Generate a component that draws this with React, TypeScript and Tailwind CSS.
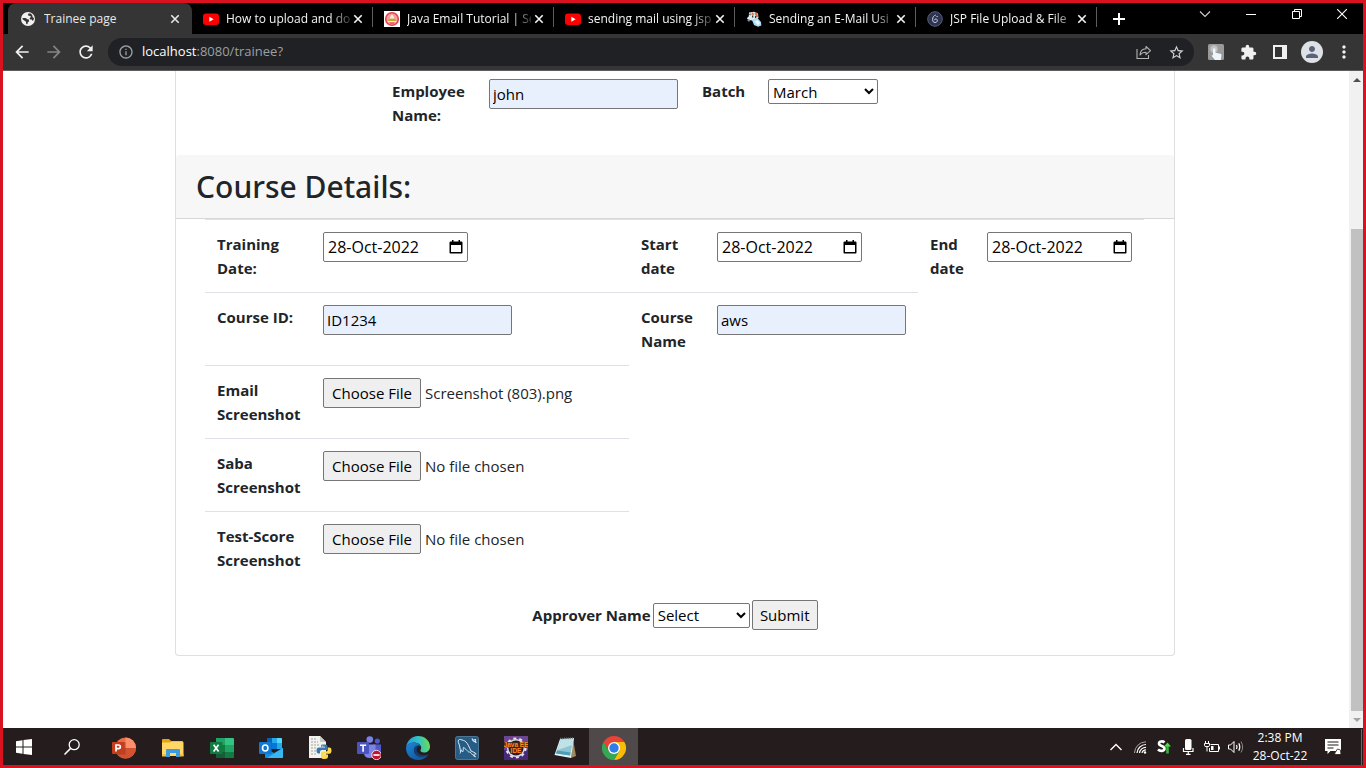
import { useEffect, useRef, useState } from "react";
import type { ReactNode } from "react";
import {
  MdArrowBack,
  MdArrowForward,
  MdRefresh,
  MdInfoOutline,
  MdStarBorder,
  MdExtension,
  MdMoreVert,
  MdPerson,
} from "react-icons/md";

/* ---------- tab strip ---------- */

function YouTubeIcon() {
  return (
    <svg viewBox="0 0 16 16" className="size-4 shrink-0" aria-hidden="true">
      <rect x="0" y="2.5" width="16" height="11.5" rx="3" fill="#f00" />
      <path d="M6.3 5.7v5l4.4-2.5z" fill="#fff" />
    </svg>
  );
}

function GlobeIcon() {
  return (
    <svg viewBox="0 0 16 16" className="size-4 shrink-0" aria-hidden="true">
      <circle cx="8" cy="8" r="7" fill="#f1f1f1" />
      <path
        d="M2.500 7h3.200l1.700 1.300 1.300.2.500 1.700-1.500 1.300-.2 1.800-1.300-.3-.2-2.200-1.700-1.300-1.800-1.200zM8.500 2.600l-.7 1.300 1 .9 1.700.3.300 1.200-1.300.8.600 1.300 1.700.2.900 1.300 1-1.200.2-1.800-1.300-1-.3-1.700-1.500-1.600z"
        fill="#353535"
      />
    </svg>
  );
}

function JavaFaceIcon() {
  return (
    <svg viewBox="0 0 16 16" className="size-4 shrink-0" aria-hidden="true">
      <rect width="16" height="16" fill="#fff" />
      <circle cx="8" cy="8" r="6.300" fill="#f4a09c" stroke="#e8434c" strokeWidth="1.600" />
      <path d="M8 3.200 10 6 9.600 8 6.400 8 6 6z" fill="#f7ecd6" />
      <path d="M3.800 10.200c.4-1.600 2.100-2.600 4.200-2.600s3.800 1 4.200 2.600z" fill="#c9a52c" />
      <path d="M3.600 10.700h8.800" stroke="#fff" strokeWidth="1" />
      <path d="M4.500 11.500h7q-3.500 2.500-7 0z" fill="#e8434c" />
    </svg>
  );
}

function CowIcon() {
  return (
    <svg viewBox="0 0 16 16" className="size-4 shrink-0" aria-hidden="true">
      <path d="M3 1.500 8 .8l4 1.700.5 4.500-4.500 3-6-1.500L.8 7.300l2-2z" fill="#dfe8ec" />
      <path d="M5 3.500 7 1l1 3zM8.500 2.200 11 1.600l1.200 4.200-1.700.8z" fill="#e06a3c" />
      <path d="M6 4.500h1.300v2H6zM9 5h1.200v2.200H9zM3 3.200l1.400-1 .2 2.300z" fill="#2b3740" />
      <path d="M6 9l5-2.500 4 4.500.3 3.600-3.300 1.200-4-1.800z" fill="#a9dcf5" />
      <path d="M8.500 10.500l3-1.500 2.500 3-2 2.200z" fill="#e8f7ff" />
      <path d="M.8 8.800l4 .8-2 1.200z" fill="#8aa3ad" />
    </svg>
  );
}

function GeekIcon() {
  return (
    <svg viewBox="0 0 16 16" className="size-4 shrink-0" aria-hidden="true">
      <circle cx="8" cy="8" r="7.300" fill="#2d3450" stroke="#565d7a" strokeWidth="1" />
      <path
        d="M8.800 4C6.800 4.500 5.600 6.300 5.600 8.500s1 3 2.400 3 2.300-.8 2.300-2-.7-1.500-1.500-1.500-1.300.4-1.300 1.200M9.500 5.500h1.200"
        fill="none"
        stroke="#cfd3e0"
        strokeWidth="1"
      />
    </svg>
  );
}

function CloseIcon() {
  return (
    <svg viewBox="0 0 10 10" className="size-[10px]" aria-hidden="true">
      <path d="M1.300 1.300l7.400 7.400M8.700 1.300 1.300 8.700" stroke="currentColor" strokeWidth="1.600" />
    </svg>
  );
}

type TabInfo = { title: string; icon: ReactNode };

const tabs: TabInfo[] = [
  { title: "How to upload and do", icon: <YouTubeIcon /> },
  { title: "Java Email Tutorial | Se", icon: <JavaFaceIcon /> },
  { title: "sending mail using jsp", icon: <YouTubeIcon /> },
  { title: "Sending an E-Mail Usi", icon: <CowIcon /> },
  { title: "JSP File Upload & File", icon: <GeekIcon /> },
];

function Tab({ title, icon }: TabInfo) {
  return (
    <div className="relative flex h-full min-w-0 basis-[181px] items-center pr-[7px] pl-[11px] text-[#f4f4f4]">
      {icon}
      <span className="ml-[7px] min-w-0 flex-1 overflow-hidden whitespace-nowrap [mask-image:linear-gradient(to_right,black_84%,#0003)]">
        {title}
      </span>
      <button type="button" aria-label={`Close ${title}`} className="grid size-4 place-items-center">
        <CloseIcon />
      </button>
      <span className="absolute top-1 right-0 h-5 w-px bg-[#5c5c5c]" />
    </div>
  );
}

function TabStrip() {
  return (
    <div className="flex h-[31px] items-stretch bg-black pl-[5px] text-[12px]">
      <div className="flex min-w-0 basis-[184px] items-center rounded-t-lg bg-[#353535] pr-[9px] pl-3 text-[#e8e8e8]">
        <GlobeIcon />
        <span className="ml-2 flex-1 truncate">Trainee page</span>
        <button type="button" aria-label="Close Trainee page" className="ml-1 grid size-4 place-items-center">
          <CloseIcon />
        </button>
      </div>
      {tabs.map((tab) => (
        <Tab key={tab.title} {...tab} />
      ))}
      <button type="button" aria-label="New tab" className="grid w-11 place-items-center text-white">
        <svg viewBox="0 0 12 12" className="size-3" aria-hidden="true">
          <path d="M6 0v12M0 6h12" stroke="currentColor" strokeWidth="2" />
        </svg>
      </button>
      <div className="ml-auto flex h-[22px] text-white">
        <button type="button" aria-label="Search tabs" className="grid w-[46px] place-items-center">
          <svg viewBox="0 0 12 12" className="size-3" aria-hidden="true">
            <path d="M1 3.500 6 8.500l5-5" fill="none" stroke="#cfcfcf" strokeWidth="1.100" />
          </svg>
        </button>
        <button type="button" aria-label="Minimize" className="grid w-[46px] place-items-center">
          <svg viewBox="0 0 10 10" className="size-[10px]" aria-hidden="true">
            <path d="M0 5.500h10" stroke="currentColor" />
          </svg>
        </button>
        <button type="button" aria-label="Restore" className="grid w-[46px] place-items-center">
          <svg viewBox="0 0 10 10" className="size-[10px]" aria-hidden="true">
            <path d="M.5 2.500h7v7h-7zM2.500 2.500v-2h7v7h-2" fill="none" stroke="currentColor" />
          </svg>
        </button>
        <button type="button" aria-label="Close window" className="grid w-[43px] place-items-center">
          <svg viewBox="0 0 10 10" className="size-[10px]" aria-hidden="true">
            <path d="M0 0l10 10M10 0 0 10" stroke="currentColor" strokeWidth="1.100" />
          </svg>
        </button>
      </div>
    </div>
  );
}

/* ---------- address bar ---------- */

function Toolbar() {
  return (
    <div className="flex h-[37px] items-center border-b border-[#5f5c5f] bg-[#353535] pl-[3px] text-[#f1f1f1]">
      <button type="button" aria-label="Back" className="grid size-8 place-items-center">
        <MdArrowBack size={20} />
      </button>
      <button type="button" aria-label="Forward" className="grid size-8 place-items-center text-[#858585]">
        <MdArrowForward size={20} />
      </button>
      <button type="button" aria-label="Reload" className="grid size-8 place-items-center">
        <MdRefresh size={20} />
      </button>
      <div className="ml-1.5 flex h-7 min-w-0 flex-1 items-center rounded-full bg-[#202124] pr-2.5 pl-2.5 text-[#9aa0a6]">
        <MdInfoOutline size={16} />
        <div className="ml-2 flex-1 text-[13px]">
          <span className="text-white">localhost</span>:8080/trainee?
        </div>
        <button type="button" aria-label="Share" className="grid w-8 place-items-center text-[#b4b4b4]">
          <svg viewBox="0 0 16 16" className="size-4" fill="none" stroke="currentColor" strokeWidth="1.100" aria-hidden="true">
            <path d="M1 5v9.500h11.500V11" />
            <path d="M10 2.500v2.300C6 5 4.200 7.500 4 11c1.500-2 3.300-2.700 6-2.700v2.400l4.500-4.100z" strokeLinejoin="round" />
          </svg>
        </button>
        <button type="button" aria-label="Bookmark" className="-mr-2 grid w-8 place-items-center text-[#d0d0d0]">
          <MdStarBorder size={17} />
        </button>
      </div>
      <button type="button" aria-label="Touch extension" className="ml-1.5 grid size-8 place-items-center">
        <svg viewBox="0 0 16 16" className="size-4" aria-hidden="true">
          <rect width="16" height="16" rx="1.500" fill="#9a9a9a" />
          <circle cx="6" cy="5" r="3.800" fill="#c4c4c4" stroke="#b0b0b0" />
          <path d="M5 5.500a1.200 1.200 0 0 1 2.400 0v3.200l5 1.100c1 .3 1.200 1 1 2L12.800 16H7l-3.500-4.200 1.500-.8z" fill="#eef5fb" />
        </svg>
      </button>
      <button type="button" aria-label="Extensions" className="grid size-8 place-items-center">
        <MdExtension size={17} />
      </button>
      <button type="button" aria-label="Side panel" className="grid size-8 place-items-center">
        <svg viewBox="0 0 14 14" className="size-[14px]" aria-hidden="true">
          <path d="M0 0h14v14H0zM2 2v10h7V2z" fillRule="evenodd" fill="currentColor" />
        </svg>
      </button>
      <button type="button" aria-label="Profile" className="grid size-8 place-items-center">
        <span className="grid size-[22px] place-items-center rounded-full bg-[#dee1e6] text-[#5a6478]">
          <MdPerson size={18} />
        </span>
      </button>
      <button type="button" aria-label="Menu" className="mr-[3px] grid size-8 place-items-center">
        <MdMoreVert size={20} />
      </button>
    </div>
  );
}

/* ---------- form ---------- */

const fieldBorder = "rounded-[2px] border border-[#767676]";

function TextField({ id, initial }: { id: string; initial: string }) {
  return (
    <input
      id={id}
      name={id}
      type="text"
      defaultValue={initial}
      className={`block h-[30px] w-[189px] bg-[#e8f0fe] px-[3px] text-black ${fieldBorder}`}
    />
  );
}

function DateField({ id }: { id: string }) {
  return (
    <div className={`flex h-[30px] w-[145px] items-center bg-white px-1 text-black ${fieldBorder}`}>
      <input id={id} name={id} type="text" defaultValue="28-Oct-2022" className="w-0 flex-1 text-[16px] outline-none" />
      <button type="button" aria-label="Open calendar" className="grid size-[14px] place-items-center">
        <svg viewBox="0 0 14 14" className="size-[14px]" aria-hidden="true">
          <path d="M3 0h1.500v1.500h5V0H11v1.500h1.500Q13.500 1.500 13.500 2.500v10q0 1-1 1h-11q-1 0-1-1v-10q0-1 1-1H3zM2 5v7h10V5z" fillRule="evenodd" />
        </svg>
      </button>
    </div>
  );
}

function FileField({ id, fileName }: { id: string; fileName?: string }) {
  const ref = useRef<HTMLInputElement>(null);
  useEffect(() => {
    if (ref.current && fileName) {
      const transfer = new DataTransfer();
      transfer.items.add(new File([""], fileName, { type: "image/png" }));
      ref.current.files = transfer.files;
    }
  }, [fileName]);
  return (
    <input
      ref={ref}
      id={id}
      name={id}
      type="file"
      className="block h-[30px] w-full file:mr-1 file:h-[30px] file:w-[98px] file:rounded-[2px] file:border file:border-solid file:border-[#767676] file:bg-[#efefef] file:p-0 file:text-black"
    />
  );
}

function FieldLabel({ htmlFor, children }: { htmlFor: string; children: ReactNode }) {
  return (
    <th scope="row" className="border-t border-[#dee2e6] p-3 text-left align-top">
      <label htmlFor={htmlFor} className="block font-bold">
        {children}
      </label>
    </th>
  );
}

function FieldCell({ children }: { children: ReactNode }) {
  return <td className="border-t border-[#dee2e6] p-3 align-top font-normal">{children}</td>;
}

const uploads = [
  { id: "emailScreenshot", label: "Email Screenshot", fileName: "Screenshot (803).png" },
  { id: "sabaScreenshot", label: "Saba Screenshot" },
  { id: "scoreScreenshot", label: "Test-Score Screenshot" },
];

function TraineeForm() {
  const [batch, setBatch] = useState("March");
  const [approver, setApprover] = useState("");
  return (
    <form
      onSubmit={(event) => event.preventDefault()}
      className="w-full max-w-[1000px] rounded-b border border-t-0 border-[#dfdfdf] bg-white text-[15px] leading-6 text-[#212529]"
    >
      <div className="flex h-[84px] items-start pt-2 pl-[216px]">
        <label htmlFor="employee" className="w-[97px] pr-4 font-bold">
          Employee Name:
        </label>
        <TextField id="employee" initial="john" />
        <label htmlFor="batch" className="ml-6 w-[66px] font-bold">
          Batch
        </label>
        <select
          id="batch"
          value={batch}
          onChange={(event) => setBatch(event.target.value)}
          className={`h-[25px] w-[110px] bg-white text-black ${fieldBorder}`}
        >
          <option>March</option>
          <option>April</option>
          <option>May</option>
        </select>
      </div>

      <div className="flex h-16 items-center rounded-t-[3px] border-b border-[#d8d8d8] bg-[#f7f7f7] px-5">
        <h2 className="font-['Noto_Sans','Open_Sans',sans-serif] text-[30px] leading-9 font-medium">Course Details:</h2>
      </div>

      <div className="pr-[30px] pl-[29px]">
        <table className="w-full table-fixed border-separate border-spacing-0">
          <colgroup>
            <col className="w-[106px]" />
            <col />
            <col className="w-[76px]" />
            <col className="w-[213px]" />
            <col className="w-[57px]" />
            <col className="w-[169px]" />
          </colgroup>
          <tbody>
            <tr>
              <FieldLabel htmlFor="trainingDate">Training Date:</FieldLabel>
              <FieldCell>
                <DateField id="trainingDate" />
              </FieldCell>
              <FieldLabel htmlFor="startDate">Start date</FieldLabel>
              <FieldCell>
                <DateField id="startDate" />
              </FieldCell>
              <FieldLabel htmlFor="endDate">End date</FieldLabel>
              <FieldCell>
                <DateField id="endDate" />
              </FieldCell>
            </tr>
            <tr>
              <FieldLabel htmlFor="courseId">Course ID:</FieldLabel>
              <FieldCell>
                <TextField id="courseId" initial="ID1234" />
              </FieldCell>
              <FieldLabel htmlFor="courseName">Course Name</FieldLabel>
              <FieldCell>
                <TextField id="courseName" initial="aws" />
              </FieldCell>
            </tr>
            {uploads.map((upload) => (
              <tr key={upload.id}>
                <FieldLabel htmlFor={upload.id}>{upload.label}</FieldLabel>
                <FieldCell>
                  <FileField id={upload.id} fileName={upload.fileName} />
                </FieldCell>
              </tr>
            ))}
          </tbody>
        </table>
      </div>

      <div className="flex items-center justify-center gap-0.5 pt-4 pb-[25px]">
        <label htmlFor="approver" className="font-bold">
          Approver Name
        </label>
        <select
          id="approver"
          value={approver}
          onChange={(event) => setApprover(event.target.value)}
          className={`h-[25px] w-[97px] bg-white text-black ${fieldBorder}`}
        >
          <option value="">Select</option>
          <option>Manager</option>
        </select>
        <button type="submit" className={`h-[30px] w-[66px] bg-[#efefef] text-black ${fieldBorder}`}>
          Submit
        </button>
      </div>
    </form>
  );
}

function ScrollTrack() {
  return (
    <div className="flex w-[14px] flex-col bg-[#f1f1f1]" aria-hidden="true">
      <div className="grid h-[17px] place-items-center">
        <svg viewBox="0 0 8 4" className="ml-0.5 h-1 w-2">
          <path d="M0 4 4 0l4 4z" fill="#505050" />
        </svg>
      </div>
      <div className="flex flex-1 flex-col pl-0.5">
        <div className="basis-[141px]" />
        <div className="flex-1 bg-[#c1c1c1]" />
      </div>
      <div className="grid h-[17px] place-items-center">
        <svg viewBox="0 0 8 4" className="ml-0.5 h-1 w-2">
          <path d="M0 0l4 4 4-4z" fill="#a3a3a3" />
        </svg>
      </div>
    </div>
  );
}

/* ---------- taskbar ---------- */

function WindowsIcon() {
  return (
    <svg viewBox="0 0 16 16" className="size-4" aria-hidden="true">
      <path d="M0 2.200 6.500 1.300v6.200H0zM7.500 1.100 16 0v7.500H7.500zM0 8.500h6.500v6.200L0 13.800zM7.500 8.500H16V16l-8.500-1.100z" fill="#fff" />
    </svg>
  );
}

function SearchIcon() {
  return (
    <svg viewBox="0 0 16 16" className="size-4" fill="none" stroke="#fff" aria-hidden="true">
      <circle cx="10.200" cy="5.700" r="5" strokeWidth="1.300" />
      <path d="M6.600 9.400.5 15.500" strokeWidth="1.500" />
    </svg>
  );
}

function PowerPointIcon() {
  return (
    <svg viewBox="0 0 24 24" className="size-6" aria-hidden="true">
      <circle cx="13.500" cy="12" r="10.500" fill="#ed6c47" />
      <path d="M13.500 1.500A10.500 10.500 0 0 1 24 12H13.500z" fill="#ff8f6b" />
      <path d="M3 12h21a10.500 10.500 0 0 1-21 0z" fill="#d35230" />
      <path d="M3 6h9.500q1 0 1 1v11.500H5z" fill="#9f3b22" opacity=".6" />
      <rect y="6" width="12" height="12" rx="1" fill="#c43e1c" />
      <path d="M4 15.500V9h2.500a1.800 1.800 0 0 1 0 3.700H4" fill="none" stroke="#fff" strokeWidth="1.700" />
    </svg>
  );
}

function FolderIcon() {
  return (
    <svg viewBox="0 0 24 24" className="size-6" aria-hidden="true">
      <path d="M1 4q0-1 1-1h6l2 2h11q1 0 1 1v4H1z" fill="#e5a50f" />
      <path d="M1 6.500h8l1.500-1H21q1.500 0 1.500 1.200V20H1z" fill="#ffd765" />
      <path d="M5 21v-7q0-1 1-1h12q1 0 1 1v7h-4v-4H9v4z" fill="#3e9be0" />
      <path d="M1 18h4v2.500H1zM19 18h3.500v2.500H19z" fill="#f6bf3e" />
    </svg>
  );
}

function ExcelIcon() {
  return (
    <svg viewBox="0 0 24 24" className="size-6" aria-hidden="true">
      <path d="M6 2h9v7H6z" fill="#21a366" />
      <path d="M15 2h8q1 0 1 1v6h-9z" fill="#33c481" />
      <path d="M6 9h9v7H6z" fill="#107c41" />
      <path d="M15 9h9v7h-9z" fill="#21a366" />
      <path d="M6 16h18v5q0 1-1 1H6z" fill="#185c37" />
      <path d="M15 16h9v5q0 1-1 1h-8z" fill="#107c41" />
      <rect y="6" width="12.500" height="12" rx="1" fill="#107c41" />
      <path d="M3.600 8.800l5 6.700M8.600 8.800l-5 6.700" stroke="#fff" strokeWidth="1.700" />
    </svg>
  );
}

function OutlookIcon() {
  return (
    <svg viewBox="0 0 24 24" className="size-6" aria-hidden="true">
      <path d="M8 3q0-1 1-1h13q1 0 1 1v10H8z" fill="#0364b8" />
      <path d="M13 2h5v5h-5z" fill="#28a8ea" />
      <path d="M18 2h4q1 0 1 1v4h-5z" fill="#50d9ff" />
      <path d="M18 7h5v6h-5z" fill="#28a8ea" />
      <path d="M13 7h5v6h-5z" fill="#0078d4" />
      <path d="M6 12l9 5 9-5v9q0 1-1 1H7q-1 0-1-1z" fill="#1490df" />
      <path d="M24 12v9q0 1-1 1H8z" fill="#35b8f1" />
      <rect y="6" width="12.500" height="12" rx="1" fill="#0f78d4" />
      <ellipse cx="6.200" cy="12" rx="2.700" ry="3" fill="none" stroke="#fff" strokeWidth="1.600" />
    </svg>
  );
}

function PythonFileIcon() {
  return (
    <svg viewBox="0 0 24 24" className="size-6" aria-hidden="true">
      <path d="M1 0h11l6 6v16H1z" fill="#f2f2ee" />
      <path d="M12 0v6h6z" fill="#c9c9c5" />
      <path d="M3 3h6M3 6h7M3 9h8M3 12h6M3 15h6M3 18h6" stroke="#a5a5a3" strokeDasharray="2 1" />
      <path d="M14.500 8.500h3q2 0 2 2V14h-5.500q-2 0-2 2v1.500h-1.500Q8.500 17.500 8.500 14.500t2.500-3h6v-.8h-4v-1q0-1.200 1.500-1.200z" fill="#3b76ad" />
      <path d="M19.800 11.500h1.500q2.200 0 2.200 3t-2.200 3.200h-5.300v.8h4v2q0 2.500-3.500 2.500t-3.500-2V17q0-1.600 1.600-1.600h3.600q1.600 0 1.600-1.600z" fill="#ffdb4b" />
      <circle cx="14.800" cy="10" r=".6" fill="#fff" />
    </svg>
  );
}

function TeamsIcon() {
  return (
    <svg viewBox="0 0 24 24" className="size-6" aria-hidden="true">
      <circle cx="20.300" cy="5" r="2.600" fill="#5059c9" />
      <path d="M16 8.500h8V15q0 4-4 4t-4-3z" fill="#5059c9" />
      <circle cx="12.800" cy="3.600" r="3.300" fill="#7b83eb" />
      <path d="M7 8.500h11.500V17q0 5-5.500 5-6 0-6-5z" fill="#7b83eb" />
      <rect y="6" width="12" height="12" rx="1" fill="#4b53bc" />
      <path d="M3 9.300h6.200M6.100 9.300v6.400" stroke="#fff" strokeWidth="1.600" />
      <circle cx="19.500" cy="19" r="4.700" fill="#c4122f" stroke="#fff" strokeWidth=".8" />
      <path d="M16.500 19h6" stroke="#fff" strokeWidth="1.700" />
    </svg>
  );
}

function EdgeIcon() {
  return (
    <svg viewBox="0 0 24 24" className="size-6" aria-hidden="true">
      <defs>
        <linearGradient id="edgeTop" x1="0" y1=".5" x2="1" y2=".4">
          <stop offset="0" stopColor="#2398dc" />
          <stop offset=".5" stopColor="#2fc0cf" />
          <stop offset="1" stopColor="#6ddc4f" />
        </linearGradient>
        <linearGradient id="edgeBase" x1="0" y1="0" x2="1" y2="1">
          <stop offset="0" stopColor="#1d87d8" />
          <stop offset="1" stopColor="#114a8b" />
        </linearGradient>
      </defs>
      <path d="M0 12C.5 5 5.500 0 12 0c7 0 12 5 12 10.500 0 4-2.800 6-6 6-2.500 0-4-1-3.500-2.200C17 10 12.500 6.300 8 6.500 3.500 6.600.5 9 0 12z" fill="url(#edgeTop)" />
      <path d="M0 12C.5 8.500 4 6.500 8 6.500c3 0 5.500 1.500 6.500 3.500C10 9 7.500 12 8 15c.7 4 4.500 6 8.500 5.500 3-.3 5-1.500 6-2.500-2 4-6 6-10.500 6C5 24 0 19 0 12z" fill="url(#edgeBase)" />
      <path d="M8 14.500C7.500 11 10.500 9 13 9.700c-2 1.300-2.800 3.300-2.100 5.600 1 3.500 6 5.200 11 2.700-2 2.500-5 3-7 2.800-4-.3-6.500-3-6.900-6.300z" fill="#123f78" />
    </svg>
  );
}

function MySqlIcon() {
  return (
    <svg viewBox="0 0 24 24" className="size-6" aria-hidden="true">
      <rect x=".5" y=".5" width="23" height="23" rx="2" fill="#255d86" stroke="#4d7692" />
      <path
        d="M5 17.500c1.200-1.500 0-3.500 0-5.500C4.800 9 3.200 7 3.200 5.300c0-2 2-2.300 3.800-1.300 1 .5 2 .2 3.200 1.200 3 2.500 4 6.300 5.800 9.800 1 .6 4.300 1.500 5.200 3-1.500.2-2.700.2-2.500.8.500.8 1.500 1.200 1.800 2-2.500-.8-3.500-2.800-5.200-4.500-.8-.5-1.500 0-2.300-.8-1.800-1.700-2.500-3-4.500-4-.6 1.500.2 3-1 4.500-.8-.8-1-1.500-1.300-2.500"
        fill="none"
        stroke="#e4edf3"
        strokeWidth="1"
      />
      <path d="M17 2.500l1 2.200 3.500 2M18.500 4l2.500-.5M20.500 6V3" stroke="#dfe8ee" strokeWidth="1.200" fill="none" />
    </svg>
  );
}

function EclipseIcon() {
  return (
    <svg viewBox="0 0 24 24" className="size-6" aria-hidden="true">
      <rect width="24" height="24" fill="#6d4690" />
      <path d="M0 14h24v10H0z" fill="#47287a" />
      <circle cx="12" cy="12" r="9.500" fill="none" stroke="#e6e3e8" strokeWidth="2.200" strokeDasharray="3 2.970" />
      <circle cx="12" cy="12" r="8.300" fill="#251c2b" stroke="#dcd9df" strokeWidth="1.500" />
      <path d="M0 6h24v5.500H0zM6 12h12v5.500H6z" fill="#47281b" opacity=".85" />
      <text x="12" y="11" textAnchor="middle" fill="#ff8a1c" fontSize="6.500" fontWeight="700" fontFamily="Liberation Sans, sans-serif">Java EE</text>
      <text x="12" y="17" textAnchor="middle" fill="#ff8a1c" fontSize="6.500" fontWeight="700" fontFamily="Liberation Sans, sans-serif">IDE</text>
    </svg>
  );
}

function NotepadIcon() {
  return (
    <svg viewBox="0 0 24 24" className="size-6" aria-hidden="true">
      <path d="M20 3l3 17-5 2z" fill="#9c8a62" />
      <path d="M7 3 21 2l-3 20L1.500 19z" fill="#e9f2f3" />
      <path d="M8 3.500 20.500 3 17 19.500 3 17.500z" fill="#8cc6d4" />
      <path d="M8 3.500 20.500 3l-1.200 6L4.700 14z" fill="#c0e1e6" />
      <path d="M3 17.500 17 19.500l.6-3L4 14.500z" fill="#4c9eb5" />
      <path d="M7 2.500 21 2" stroke="#66777a" strokeDasharray="1 1" strokeWidth="1.500" />
    </svg>
  );
}

function ChromeIcon() {
  return (
    <svg viewBox="0 0 24 24" className="size-6" aria-hidden="true">
      <path d="M12 6h10.400A12 12 0 0 1 12 24l5.200-9z" fill="#fbbc05" />
      <path d="M12 6h10.400A12 12 0 0 0 1.600 6l5.200 9z" fill="#ea4335" />
      <path d="M17.200 15 12 24A12 12 0 0 1 1.600 6l5.200 9z" fill="#34a853" />
      <circle cx="12" cy="12" r="6" fill="#fff" />
      <circle cx="12" cy="12" r="4.700" fill="#2f7de9" />
    </svg>
  );
}

const apps: { name: string; icon: ReactNode; active?: boolean }[] = [
  { name: "PowerPoint", icon: <PowerPointIcon /> },
  { name: "File Explorer", icon: <FolderIcon /> },
  { name: "Excel", icon: <ExcelIcon /> },
  { name: "Outlook", icon: <OutlookIcon /> },
  { name: "Python", icon: <PythonFileIcon /> },
  { name: "Teams", icon: <TeamsIcon /> },
  { name: "Edge", icon: <EdgeIcon /> },
  { name: "MySQL Workbench", icon: <MySqlIcon /> },
  { name: "Eclipse", icon: <EclipseIcon /> },
  { name: "Notepad", icon: <NotepadIcon /> },
  { name: "Chrome", icon: <ChromeIcon />, active: true },
];

function Tray() {
  return (
    <div className="ml-auto flex items-center text-white">
      <button type="button" aria-label="Show hidden icons" className="grid w-6 place-items-center">
        <svg viewBox="0 0 12 8" className="h-2 w-3" fill="none" stroke="currentColor" strokeWidth="1.400" aria-hidden="true">
          <path d="M.5 7 6 1.500 11.500 7" />
        </svg>
      </button>
      <button type="button" aria-label="Network" className="grid w-6 place-items-center">
        <svg viewBox="0 0 14 14" className="size-[14px]" fill="none" stroke="currentColor" aria-hidden="true">
          <path d="M1.500 13A11.500 11.500 0 0 1 13 1.800" stroke="#a7a3a4" />
          <path d="M4 13a9 9 0 0 1 9-8.500M6.500 13A6.500 6.500 0 0 1 13 7.300M9 13a4 4 0 0 1 4-3.200" strokeWidth="1.200" />
          <circle cx="12" cy="12.500" r="1.200" fill="currentColor" stroke="none" />
        </svg>
      </button>
      <button type="button" aria-label="Sync" className="grid w-6 place-items-center">
        <svg viewBox="0 0 16 16" className="size-4" fill="none" aria-hidden="true">
          <path d="M8.500 3.500C7 2 3 1.800 3 4.500c0 3 5.500 2 5.500 5 0 3-4.500 3-6.500 1" stroke="#fff" strokeWidth="2.600" />
          <path d="M11.500 14.500V6" stroke="#37b53a" strokeWidth="2.600" />
          <path d="M8 7.500 11.500 3.500l3.500 4z" fill="#55dc4c" />
        </svg>
      </button>
      <button type="button" aria-label="Microphone" className="grid w-6 place-items-center">
        <svg viewBox="0 0 12 16" className="h-4 w-3" aria-hidden="true">
          <rect x="3" width="6.500" height="11" rx="1.500" fill="currentColor" />
          <path d="M1.500 9v3.500h9.500V9M6.250 12.500V15M4 15.300h4.500" stroke="currentColor" fill="none" strokeWidth="1.200" />
        </svg>
      </button>
      <button type="button" aria-label="Battery" className="grid w-6 place-items-center">
        <svg viewBox="0 0 16 12" className="h-3 w-4" fill="none" stroke="currentColor" aria-hidden="true">
          <path d="M6.500 3.500h8v7h-9V7M15.500 5.500v3" />
          <path d="M1.500 0v2M4.500 0v2M.5 2.500h5v2q0 1-1.500 1H2q-1.500 0-1.500-1zM3 5.500v5" />
          <path d="M7 5h2.500v4H7z" fill="currentColor" stroke="none" />
        </svg>
      </button>
      <button type="button" aria-label="Volume" className="grid w-6 place-items-center">
        <svg viewBox="0 0 16 14" className="h-[14px] w-4" fill="none" stroke="currentColor" aria-hidden="true">
          <path d="M.5 5h2L6 1.500v11L2.500 9h-2z" />
          <path d="M8.500 5q1 2 0 4M10.800 3.300q2 3.700 0 7.400" strokeWidth="1.200" />
          <path d="M13 1.500q3.300 5.500 0 11" stroke="#8d898a" />
        </svg>
      </button>
      <time className="w-16 text-center text-[12px] leading-[18px] whitespace-nowrap">
        2:38 PM
        <br />
        28-Oct-22
      </time>
      <button type="button" aria-label="Notifications" className="mr-2.5 ml-[3px] grid w-9 place-items-center">
        <svg viewBox="0 0 18 16" className="h-4 w-[18px]" aria-hidden="true">
          <path d="M1 0h16v12H6.500L3.500 15v-3H1z" fill="currentColor" />
          <path d="M3.500 3h11M3.500 6h11M3.500 9h6" stroke="#241c1d" strokeWidth="1.200" />
          <path d="M10.500 14.500l3-4.500 3 1 .5 4.500h-5z" fill="currentColor" stroke="#241c1d" strokeWidth=".8" />
        </svg>
      </button>
      <span className="mr-px h-9 w-px bg-[#6a6566]" />
    </div>
  );
}

function Taskbar() {
  return (
    <div className="flex h-[37px] items-stretch bg-[#241c1d]">
      <button type="button" aria-label="Start" className="grid w-[42px] place-items-center">
        <WindowsIcon />
      </button>
      <button type="button" aria-label="Search" className="grid w-[54px] place-items-center">
        <SearchIcon />
      </button>
      {apps.map((app) => (
        <button
          key={app.name}
          type="button"
          aria-label={app.name}
          className={`grid w-[49px] place-items-center pt-0.5 ${app.active ? "bg-[#4f494a]" : ""}`}
        >
          {app.icon}
        </button>
      ))}
      <Tray />
    </div>
  );
}

export default function App() {
  return (
    <div className="flex min-h-screen flex-col border-3 border-[#d9121f] bg-white font-['Open_Sans',sans-serif]">
      <TabStrip />
      <Toolbar />
      <div className="flex flex-1">
        <main className="flex flex-1 items-start justify-center pr-0.5">
          <TraineeForm />
        </main>
        <ScrollTrack />
      </div>
      <Taskbar />
    </div>
  );
}
